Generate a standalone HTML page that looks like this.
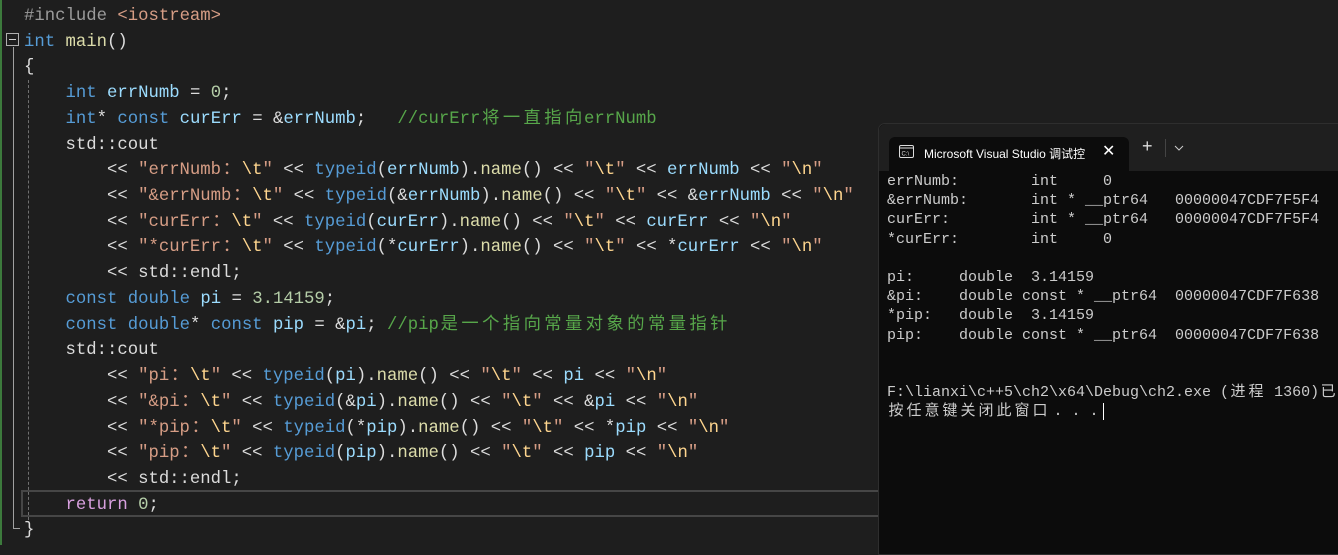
<!DOCTYPE html><html><head><meta charset="utf-8"><style>
body{margin:0;width:1338px;height:545px;background:#1e1e1e;overflow:hidden;position:relative;font-family:"Liberation Mono","Noto Sans CJK SC",monospace}
#code{position:absolute;left:24px;top:4px;font-size:17.3px;line-height:25.72px;color:#dcdcdc;white-space:pre}
.k{color:#569cd6}.v{color:#9cdcfe}.s{color:#d69d85}.e{color:#ffd68f}.f{color:#dcdcaa}.c{color:#57a64a}.n{color:#b5cea8}.r{color:#d8a0df}.p{color:#9b9b9b}
.w{display:inline-block;width:2ch;text-align:center}
#term{position:absolute;left:878px;top:123px;width:470px;height:430px;background:#0c0c0c;border:1px solid #2e2e2e;border-radius:7px 0 0 0}
#bar{height:47px;background:#1f1f1f;border-radius:7px 0 0 0;position:relative}
#tab{position:absolute;left:10px;top:13px;width:240px;height:34px;background:#0c0c0c;border-radius:6px 6px 0 0;font-family:"Liberation Sans","Noto Sans CJK SC",sans-serif;font-size:12px;color:#fff}
#tt{position:absolute;left:35px;top:8px}
#out{position:absolute;left:8px;top:48px;font-size:15px;line-height:19.2px;color:#cccccc;white-space:pre}
.t{display:inline-block;width:18px;text-align:center}
</style></head><body>
<div style="position:absolute;left:0;top:0;width:2px;height:545px;background:#3c7a3c"></div>
<div style="position:absolute;left:6px;top:33px;width:11px;height:11px;border:1px solid #b0b0b0"></div>
<div style="position:absolute;left:9px;top:39px;width:7px;height:1px;background:#d0d0d0"></div>
<div style="position:absolute;left:13px;top:47px;width:1px;height:482px;background:#a0a0a0"></div>
<div style="position:absolute;left:13px;top:528px;width:7px;height:1px;background:#a0a0a0"></div>
<div style="position:absolute;left:28px;top:80px;width:0;height:440px;border-left:1px dashed #707070"></div>
<div style="position:absolute;left:21px;top:490px;width:860px;height:23px;border:2px solid #464646"></div>
<div id="code"><span class="p">#include</span> <span class="s">&lt;iostream&gt;</span>
<span class="k">int</span> <span class="f">main</span>()
{
    <span class="k">int</span> <span class="v">errNumb</span> = <span class="n">0</span>;
    <span class="k">int</span>* <span class="k">const</span> <span class="v">curErr</span> = &amp;<span class="v">errNumb</span>;   <span class="c">//curErr<span class="w">将</span><span class="w">一</span><span class="w">直</span><span class="w">指</span><span class="w">向</span>errNumb</span>
    std::cout
        &lt;&lt; <span class="s">"errNumb<span class="w">：</span><span class="e">\t</span>"</span> &lt;&lt; <span class="k">typeid</span>(<span class="v">errNumb</span>).<span class="f">name</span>() &lt;&lt; <span class="s">"<span class="e">\t</span>"</span> &lt;&lt; <span class="v">errNumb</span> &lt;&lt; <span class="s">"<span class="e">\n</span>"</span>
        &lt;&lt; <span class="s">"&amp;errNumb<span class="w">：</span><span class="e">\t</span>"</span> &lt;&lt; <span class="k">typeid</span>(&amp;<span class="v">errNumb</span>).<span class="f">name</span>() &lt;&lt; <span class="s">"<span class="e">\t</span>"</span> &lt;&lt; &amp;<span class="v">errNumb</span> &lt;&lt; <span class="s">"<span class="e">\n</span>"</span>
        &lt;&lt; <span class="s">"curErr<span class="w">：</span><span class="e">\t</span>"</span> &lt;&lt; <span class="k">typeid</span>(<span class="v">curErr</span>).<span class="f">name</span>() &lt;&lt; <span class="s">"<span class="e">\t</span>"</span> &lt;&lt; <span class="v">curErr</span> &lt;&lt; <span class="s">"<span class="e">\n</span>"</span>
        &lt;&lt; <span class="s">"*curErr<span class="w">：</span><span class="e">\t</span>"</span> &lt;&lt; <span class="k">typeid</span>(*<span class="v">curErr</span>).<span class="f">name</span>() &lt;&lt; <span class="s">"<span class="e">\t</span>"</span> &lt;&lt; *<span class="v">curErr</span> &lt;&lt; <span class="s">"<span class="e">\n</span>"</span>
        &lt;&lt; std::endl;
    <span class="k">const</span> <span class="k">double</span> <span class="v">pi</span> = <span class="n">3.14159</span>;
    <span class="k">const</span> <span class="k">double</span>* <span class="k">const</span> <span class="v">pip</span> = &amp;<span class="v">pi</span>; <span class="c">//pip<span class="w">是</span><span class="w">一</span><span class="w">个</span><span class="w">指</span><span class="w">向</span><span class="w">常</span><span class="w">量</span><span class="w">对</span><span class="w">象</span><span class="w">的</span><span class="w">常</span><span class="w">量</span><span class="w">指</span><span class="w">针</span></span>
    std::cout
        &lt;&lt; <span class="s">"pi<span class="w">：</span><span class="e">\t</span>"</span> &lt;&lt; <span class="k">typeid</span>(<span class="v">pi</span>).<span class="f">name</span>() &lt;&lt; <span class="s">"<span class="e">\t</span>"</span> &lt;&lt; <span class="v">pi</span> &lt;&lt; <span class="s">"<span class="e">\n</span>"</span>
        &lt;&lt; <span class="s">"&amp;pi<span class="w">：</span><span class="e">\t</span>"</span> &lt;&lt; <span class="k">typeid</span>(&amp;<span class="v">pi</span>).<span class="f">name</span>() &lt;&lt; <span class="s">"<span class="e">\t</span>"</span> &lt;&lt; &amp;<span class="v">pi</span> &lt;&lt; <span class="s">"<span class="e">\n</span>"</span>
        &lt;&lt; <span class="s">"*pip<span class="w">：</span><span class="e">\t</span>"</span> &lt;&lt; <span class="k">typeid</span>(*<span class="v">pip</span>).<span class="f">name</span>() &lt;&lt; <span class="s">"<span class="e">\t</span>"</span> &lt;&lt; *<span class="v">pip</span> &lt;&lt; <span class="s">"<span class="e">\n</span>"</span>
        &lt;&lt; <span class="s">"pip<span class="w">：</span><span class="e">\t</span>"</span> &lt;&lt; <span class="k">typeid</span>(<span class="v">pip</span>).<span class="f">name</span>() &lt;&lt; <span class="s">"<span class="e">\t</span>"</span> &lt;&lt; <span class="v">pip</span> &lt;&lt; <span class="s">"<span class="e">\n</span>"</span>
        &lt;&lt; std::endl;
    <span class="r">return</span> <span class="n">0</span>;
}</div>
<div id="term">
<div id="bar"><div id="tab">
<svg style="position:absolute;left:10px;top:8px" width="15" height="13" viewBox="0 0 15 13"><rect x="0.5" y="0.5" width="14" height="12" rx="1.5" fill="none" stroke="#ddd"/><line x1="0.5" y1="3" x2="14.5" y2="3" stroke="#ddd"/><text x="2.5" y="10.5" font-size="6" fill="#ddd" font-family="Liberation Sans">C:\</text></svg>
<span id="tt">Microsoft Visual Studio 调试控</span>
<span style="position:absolute;left:213px;top:4px;font-size:16px">✕</span></div>
<span style="position:absolute;left:263px;top:12px;color:#ddd;font-size:18px;font-family:'Liberation Sans'">+</span>
<div style="position:absolute;left:286px;top:15px;width:1px;height:18px;background:#444"></div>
<svg style="position:absolute;left:295px;top:21px" width="10" height="6"><path d="M1 1 L5 5 L9 1" stroke="#ccc" fill="none"/></svg>
</div>
<div id="out">errNumb:        int     0
&amp;errNumb:       int * __ptr64   00000047CDF7F5F4
curErr:         int * __ptr64   00000047CDF7F5F4
*curErr:        int     0

pi:     double  3.14159
&amp;pi:    double const * __ptr64  00000047CDF7F638
*pip:   double  3.14159
pip:    double const * __ptr64  00000047CDF7F638


F:\lianxi\c++5\ch2\x64\Debug\ch2.exe (<span class="t">进</span><span class="t">程</span> 1360)<span class="t">已</span>
<span class="t">按</span><span class="t">任</span><span class="t">意</span><span class="t">键</span><span class="t">关</span><span class="t">闭</span><span class="t">此</span><span class="t">窗</span><span class="t">口</span><span class="t">.</span><span class="t">.</span><span class="t">.</span><span style="display:inline-block;width:1px;height:17px;background:#fff;vertical-align:middle"></span></div>
</div>
</body></html>
